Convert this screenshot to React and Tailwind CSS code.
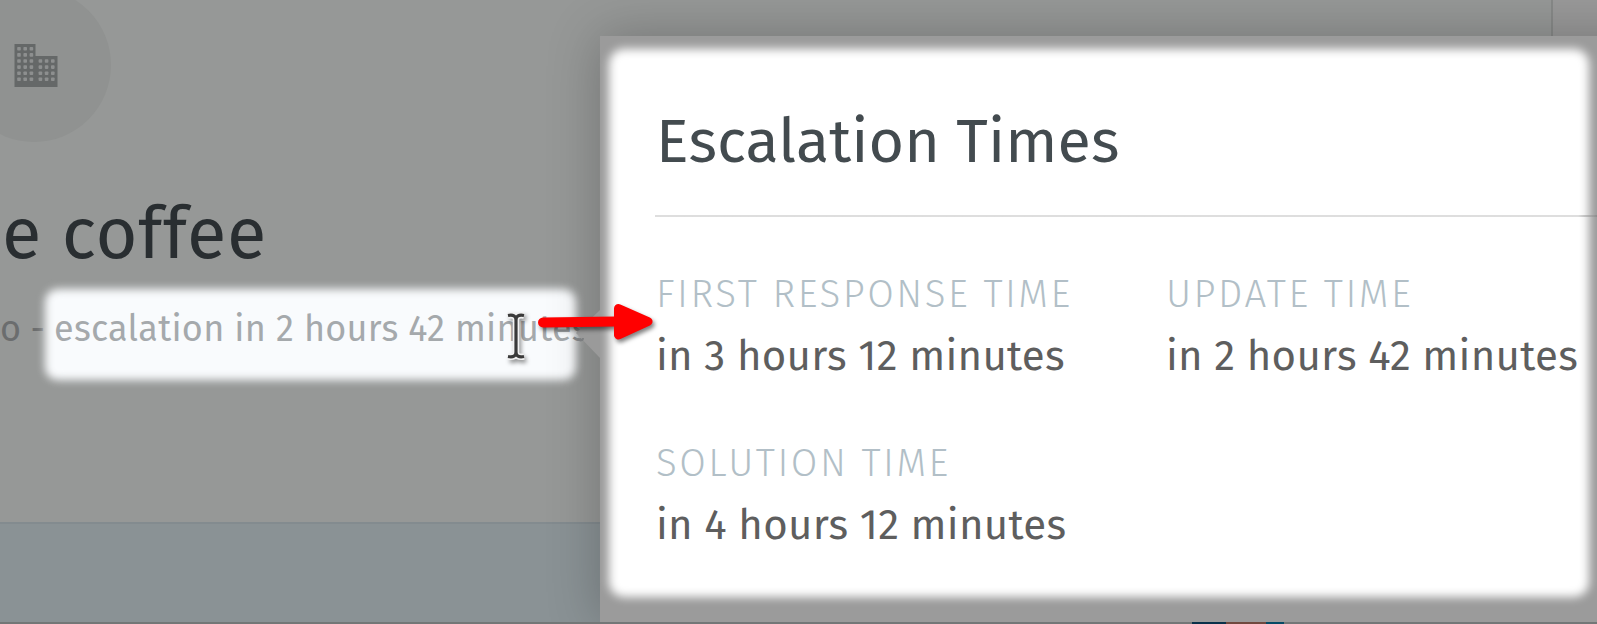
import React from "react";

const dots = [];
for (let r = 0; r < 6; r++) {
  for (let c = 0; c < 3; c++) {
    dots.push([17.2 + c * 6.2, 47 + r * 6.1]);
    if (r > 1) dots.push([38.6 + c * 6.2, 47 + r * 6.1]);
  }
}

function Building() {
  return (
    <svg className="ml-[4px] h-[45px] w-[45px]" viewBox="14 43 45 45">
      <path d="M14.5 44H35.5V56H57.5V87H14.5Z" fill="#656868" />
      {dots.map(([x, y], i) => (
        <rect key={i} x={x} y={y} width="3.6" height="3.6" rx="0.8" fill="#8d8f8f" />
      ))}
    </svg>
  );
}

function Entry({ label, value }) {
  return (
    <div className="flex flex-col">
      <span className="h-[52px] text-[38.5px] leading-[52px] font-light tracking-[2.5px] text-[#b2bfc7]">{label}</span>
      <span className="mt-2.5 h-[52px] text-[42px] leading-[52px] tracking-[0.25px] text-[#5e5e5e]">{value}</span>
    </div>
  );
}

export default function App() {
  return (
    <div className="relative h-[624px] w-[1597px] overflow-hidden bg-[#969897] font-['Fira_Sans','Noto_Sans',sans-serif] whitespace-nowrap [font-variant-ligatures:none]">
      <div className="flex h-full">
        <main className="flex w-[1551px] shrink-0 flex-col">
          <div className="flex h-[142px] w-[111px] items-start overflow-hidden">
            <div className="-mt-[12px] -ml-[43px] flex h-[154px] w-[154px] shrink-0 items-center justify-center rounded-full bg-[#909291]">
              <Building />
            </div>
          </div>
          <h1 className="mt-[44px] h-[96px] pl-[2px] text-[72px] leading-[96px] tracking-[0.7px] text-[#292e31]">e coffee</h1>
          <div className="relative mt-[21px] flex h-[52px] text-[36px] leading-[52px]">
            <div className="absolute top-[-14px] left-[45px] h-[91px] w-[531px] rounded-[13px] bg-[#f9fbfd] blur-[4.5px]" />
            <span className="w-[54px] shrink-0 text-[#6b6d6e]">o -</span>
            <span className="relative tracking-[0.28px] text-[#a5a9ac]">
              escalation in 2 hours 42 minute<span className="text-[#85888a]">s</span>
            </span>
          </div>
          <div className="mt-[167px] flex-1 border-t-2 border-[#838b8f] bg-[#8a9295]" />
        </main>
        <aside className="flex-1 border-l-2 border-[#878988] bg-[#999999]" />
      </div>

      <section className="absolute top-[36px] left-[600px] h-[586px] w-[1100px] bg-[#9b9b9b] shadow-[0_0_50px_rgba(0,0,0,0.24)]">
        <div className="absolute top-[13px] left-[9px] h-[548px] w-[980px] rounded-[15px] bg-white blur-[5px]" />
        <div className="relative flex flex-col pl-[56px]">
          <h2 className="mt-[65px] h-[82px] text-[61px] leading-[82px] tracking-[0.08px] text-[#434b4f]">Escalation Times</h2>
          <div className="mt-[32px] -ml-px h-[2px] w-[942px] bg-linear-to-r from-[#dedede] from-98% to-[#8c8c8c]" />
          <div className="mt-[51px] grid grid-cols-[510px_510px] gap-y-[55px]">
            <Entry label="FIRST RESPONSE TIME" value="in 3 hours 12 minutes" />
            <Entry label="UPDATE TIME" value="in 2 hours 42 minutes" />
            <Entry label="SOLUTION TIME" value="in 4 hours 12 minutes" />
          </div>
        </div>
      </section>

      <div className="absolute top-[622px] left-0 flex h-[2px] w-full bg-[#737777]">
        <div className="ml-[1192px] w-[34px] bg-[#09314a]" />
        <div className="w-[40px] bg-[#70493f]" />
        <div className="w-[18px] bg-[#064a65]" />
      </div>

      <svg className="absolute top-[290px] left-[490px] h-[90px] w-[180px]" viewBox="490 290 180 90">
        <path d="M600 310L576 333L600 358Z" fill="#9a9a9a" />
        <path d="M578 339C580 341 583 341 583 338" fill="none" stroke="#7c7e80" strokeWidth="2" />
        <g className="drop-shadow-[2px_3px_2px_rgba(0,0,0,0.4)]">
          <path d="M508 315.5Q516 314 516 320Q516 314 524 315.5M516 319V353M508 356.5Q516 358 516 352Q516 358 524 356.5" fill="none" stroke="#f2f2f2" strokeWidth="6.5" />
          <path d="M508 315.5Q516 314 516 320Q516 314 524 315.5M516 319V353M508 356.5Q516 358 516 352Q516 358 524 356.5" fill="none" stroke="#3a3a3a" strokeWidth="3.2" />
        </g>
        <g className="drop-shadow-[2px_3px_2px_rgba(0,0,0,0.5)]" stroke="#ff0000" strokeLinecap="round" strokeLinejoin="round">
          <path d="M543 322.5L616 321.5" fill="none" strokeWidth="10" />
          <path d="M618.5 308.5L648 321.5L618.5 335Z" fill="#ff0000" strokeWidth="9" />
        </g>
      </svg>
    </div>
  );
}
